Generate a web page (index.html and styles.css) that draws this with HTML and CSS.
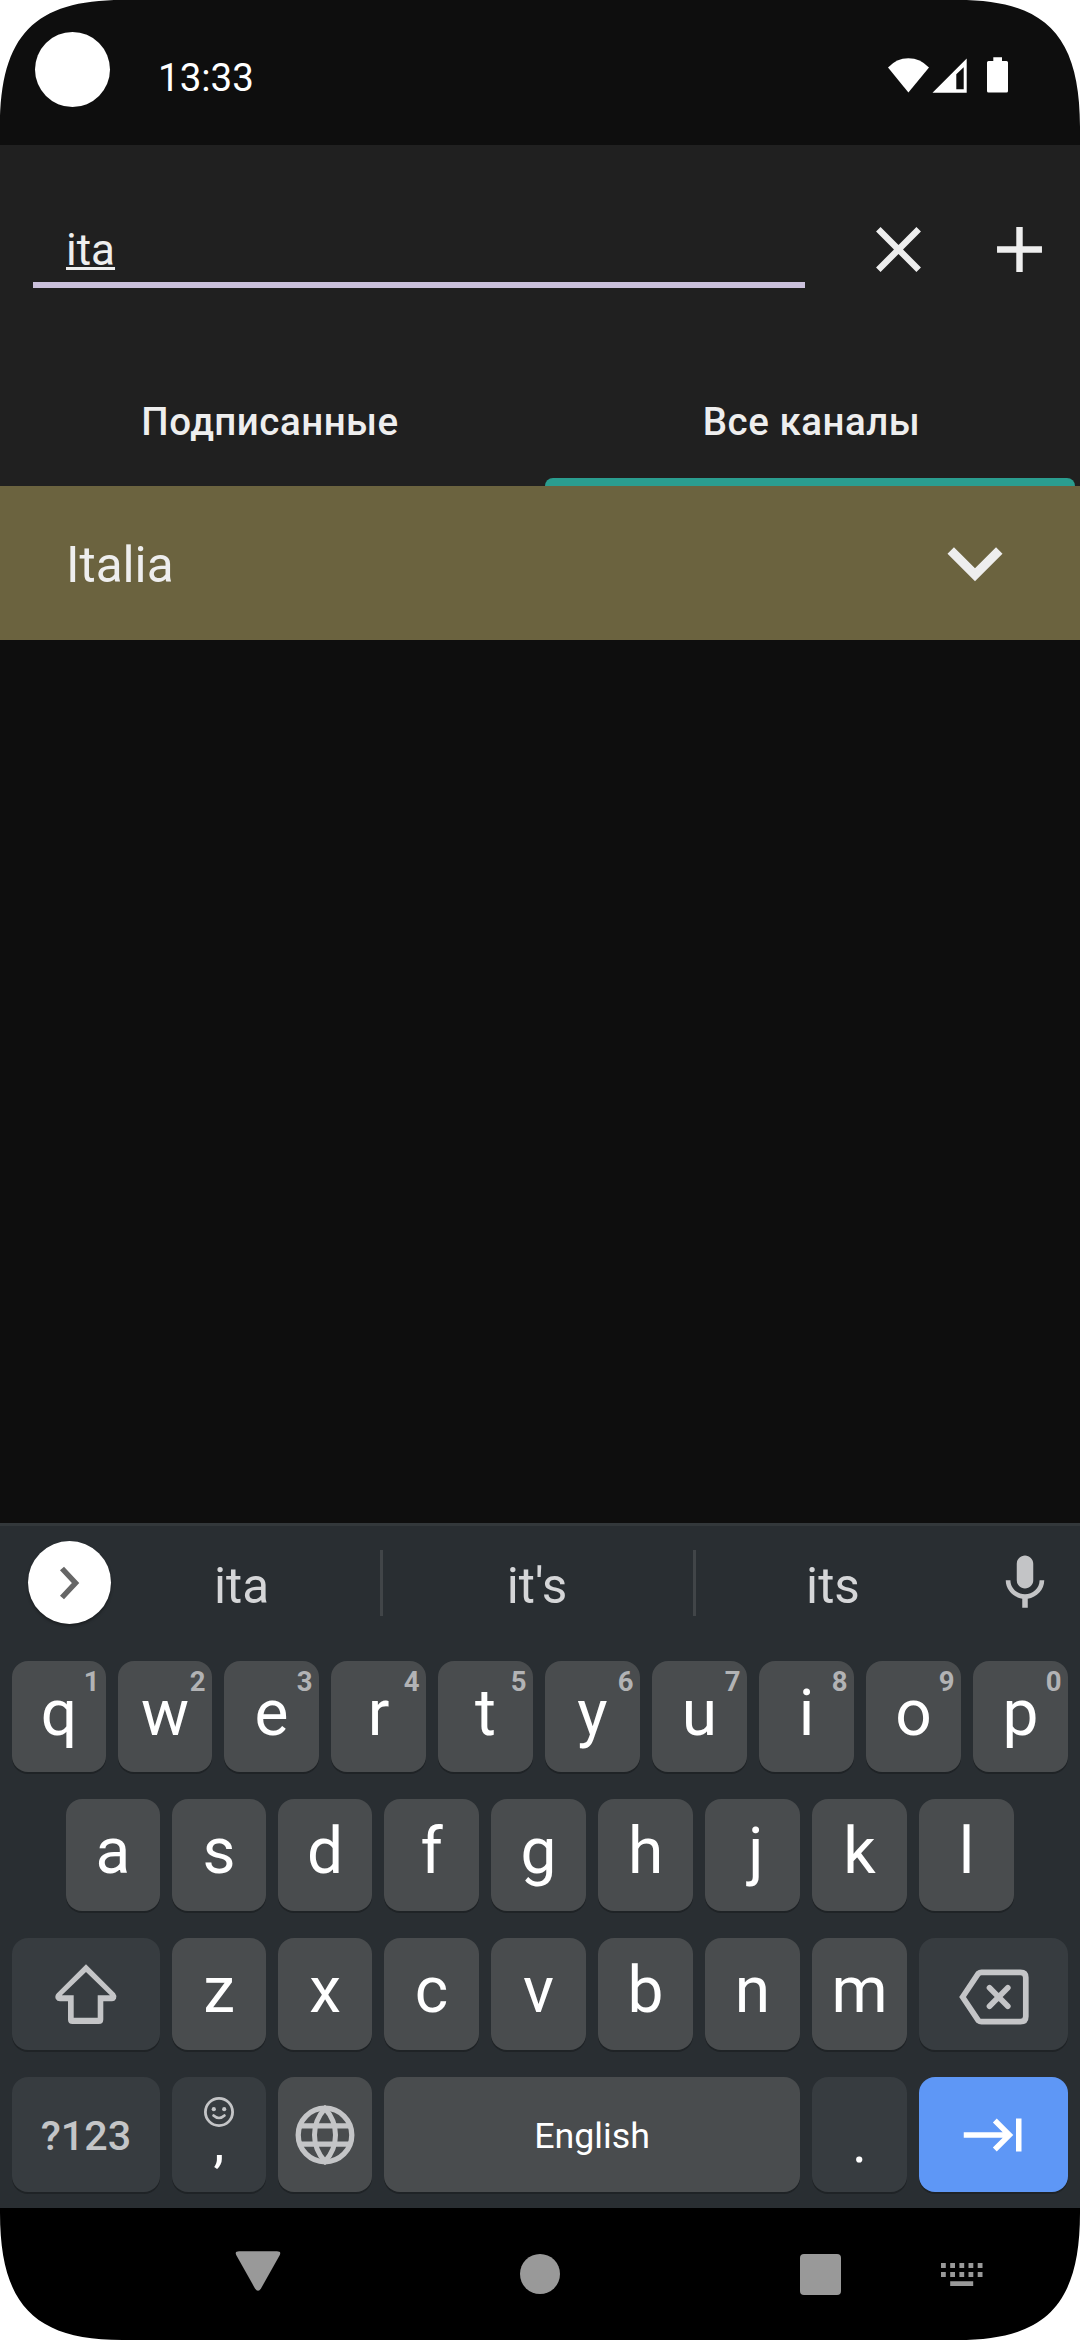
FILE: index.html
```html
<!DOCTYPE html>
<html lang="ru">
<head>
<meta charset="utf-8">
<title>Каналы</title>
<link rel="stylesheet" href="styles.css">
</head>
<body>
<div class="screen">
  <header class="status">
    <span class="camera"></span>
    <span class="clock">13:33</span>
    <svg class="status-icons" width="122" height="38" viewBox="887 56 122 38" fill="#fff">
      <path d="M908.4 92.4 888 67.6Q896.500 58.300 908.400 58.300T929 67.600Z"/>
      <path fill-rule="evenodd" d="M932.500 92.700 966.700 58.400V92.700ZM956.300 89.300H963.700V67.300L956.300 74.300Z"/>
      <path d="M993.300 57.200H1002V61H1006.500Q1008 61 1008 62.500V91Q1008 92.600 1006.500 92.600H988.500Q987 92.600 987 91V62.500Q987 61 988.500 61H993.300Z"/>
    </svg>
  </header>

  <section class="toolbar">
    <div class="search">
      <div class="field"><span class="query">ita</span></div>
      <svg class="action" viewBox="0 0 24 24"><path d="M19 6.410 17.590 5 12 10.590 6.410 5 5 6.410 10.590 12 5 17.590 6.410 19 12 13.410 17.590 19 19 17.590 13.410 12z"/></svg>
      <svg class="action" viewBox="0 0 24 24"><path d="M19 13h-6v6h-2v-6H5v-2h6V5h2v6h6v2z"/></svg>
    </div>
    <nav class="tabs">
      <div class="tab">Подписанные</div>
      <div class="tab active">Все каналы</div>
    </nav>
  </section>

  <main class="list">
    <div class="row">
      <span class="name">Italia</span>
      <svg class="expand" viewBox="0 0 24 24"><path d="M7.410 8.590 12 13.170l4.590-4.580L18 10l-6 6-6-6z"/></svg>
    </div>
  </main>

  <section class="keyboard">
    <div class="strip">
      <span class="more"><svg width="22" height="36" viewBox="0 0 22 36"><path d="M3 3.500 16.500 18 3 32.500" fill="none" stroke="#666" stroke-width="5.500"/></svg></span>
      <span class="word first">ita</span>
      <span class="word mid">it's</span>
      <span class="word last">its</span>
      <svg class="mic" viewBox="0 0 24 24"><path d="M12 14c1.660 0 3-1.340 3-3V5c0-1.660-1.340-3-3-3S9 3.340 9 5v6c0 1.660 1.340 3 3 3zM17.300 11c0 3-2.540 5.100-5.300 5.100S6.700 14 6.700 11H5c0 3.410 2.720 6.230 6 6.720V21h2v-3.280c3.280-.480 6-3.300 6-6.720z"/></svg>
    </div>
    <div class="keys">
      <div class="keyrow top">
        <div class="key">q<sup class="alt">1</sup></div><div class="key">w<sup class="alt">2</sup></div><div class="key">e<sup class="alt">3</sup></div><div class="key">r<sup class="alt">4</sup></div><div class="key">t<sup class="alt">5</sup></div><div class="key">y<sup class="alt">6</sup></div><div class="key">u<sup class="alt">7</sup></div><div class="key">i<sup class="alt">8</sup></div><div class="key">o<sup class="alt">9</sup></div><div class="key">p<sup class="alt">0</sup></div>
      </div>
      <div class="keyrow home">
        <div class="key">a</div><div class="key">s</div><div class="key">d</div><div class="key">f</div><div class="key">g</div><div class="key">h</div><div class="key hook">j</div><div class="key">k</div><div class="key">l</div>
      </div>
      <div class="keyrow lower">
        <div class="key fn wide">
          <svg width="68" height="66" viewBox="0 0 68 66"><path fill-rule="evenodd" d="M34 3.200 63 32.300Q65.200 34.800 64 37.800 62.800 40.300 60 40.300H51.300V58.500Q51.300 63 46.800 63H20.500Q16 63 16 58.500V40.300H8Q5 40.300 3.700 37.800 2.500 34.800 5 32.300ZM34 11 9.800 34.300H21.700V56.800H45.700V34.300H58Z"/></svg>
        </div>
        <div class="key">z</div><div class="key">x</div><div class="key">c</div><div class="key">v</div><div class="key">b</div><div class="key">n</div><div class="key">m</div>
        <div class="key fn wide">
          <svg class="erase" width="72" height="58" viewBox="0 0 72 58"><path d="M4.600 29 20 5.800Q21.800 4.300 23.500 4.300H62.500Q67.800 4.300 67.800 9.500V48.500Q67.800 53.700 62.500 53.700H23.500Q21.800 53.700 20 52.200ZM31.500 19.800 49.800 38.200M49.800 19.800 31.500 38.200" fill="none" stroke="#c4c5c7" stroke-width="5.700" stroke-linecap="round"/></svg>
        </div>
      </div>
      <div class="keyrow bottom">
        <div class="key fn wide symbols">?123</div>
        <div class="key fn comma">
          <svg width="32" height="32" viewBox="0 0 32 32"><circle cx="16" cy="16" r="13.600" fill="none" stroke="#c4c5c7" stroke-width="2.800"/><circle cx="10.800" cy="13.200" r="2.100"/><circle cx="21.200" cy="13.200" r="2.100"/><path d="M10.500 19.500Q16 24.500 21.500 19.500" fill="none" stroke="#c4c5c7" stroke-width="2.600" stroke-linecap="round"/></svg>
          <span>,</span>
        </div>
        <div class="key globe">
          <svg width="60" height="60" viewBox="0 0 60 60" fill="none" stroke="#c4c5c7" stroke-width="5.300"><circle cx="30" cy="30" r="26.800"/><path d="M5.500 20.900H54.500M5.500 39.200H54.500"/><path d="M30 3.500Q19.500 15 19.500 30T30 56.500Q40.500 45 40.500 30T30 3.500Z" stroke-width="5"/></svg>
        </div>
        <div class="key space">English</div>
        <div class="key fn period">.</div>
        <div class="key wide enter">
          <svg width="66" height="66" viewBox="0 0 24 24"><path d="M11.590 7.410 15.170 11H1v2h14.170l-3.590 3.590L13 18l6-6-6-6zM20 6v12h2V6z"/></svg>
        </div>
      </div>
    </div>
  </section>

  <footer class="navbar">
    <svg class="nav-back" width="46" height="40" viewBox="0 0 46 40"><path d="M4 .300H42Q46.500 .300 44.800 4L26 37.500Q23 42 20 37.500L1.200 4Q-.500 .300 4 .300Z"/></svg>
    <span class="nav-home"></span>
    <span class="nav-recent"></span>
    <svg class="nav-ime" width="42" height="23" viewBox="0 0 42 23"><path d="M0 0h4.800v5H0zM9.200 0H14v5H9.200zM18.400 0h4.800v5h-4.800zM27.500 0h4.800v5h-4.800zM36.700 0h4.800v5h-4.800zM0 9h4.800v5H0zM9.200 9H14v5H9.200zM18.400 9h4.800v5h-4.800zM27.500 9h4.800v5h-4.800zM36.700 9h4.800v5h-4.800zM9.200 18.200h23v4.800h-23z"/></svg>
  </footer>

  <svg class="corner tl" viewBox="0 0 128 128"><path d="M0 127C0 35 35 0 122 0H0Z"/></svg>
  <svg class="corner tr" viewBox="0 0 128 128"><path d="M0 127C0 35 35 0 122 0H0Z"/></svg>
  <svg class="corner bl" viewBox="0 0 128 128"><path d="M0 127C0 35 35 0 122 0H0Z"/></svg>
  <svg class="corner br" viewBox="0 0 128 128"><path d="M0 127C0 35 35 0 122 0H0Z"/></svg>
</div>
</body>
</html>
```
FILE: styles.css
```css
* { box-sizing: border-box; }
body { margin: 0; background: #fff; font-family: Roboto, "Liberation Sans", sans-serif; }
svg { display: block; flex: none; }

.screen {
  position: relative;
  width: 1080px;
  height: 2340px;
  overflow: hidden;
  display: flex;
  flex-direction: column;
  background: #0e0e0e;
  color: #eee;
}

/* Status bar */
.status { height: 145px; display: flex; align-items: flex-start; padding: 32px 71px 0 35px; }
.camera { width: 75px; height: 75px; border-radius: 50%; background: #fff; }
.clock { margin: 23px 0 0 48px; font-size: 38.5px; line-height: 46px; color: #fff; }
.status-icons { margin: 24px 0 0 auto; }

/* Search and tabs */
.toolbar { height: 341px; background: #202020; display: flex; flex-direction: column; justify-content: space-between; }
.search { display: flex; padding: 66px 22px 0 33px; }
.field { width: 772px; height: 77px; padding-left: 33px; border-bottom: 6px solid #cbc1dc; }
.query {
  font-size: 44px;
  line-height: 78px;
  text-decoration: underline;
  text-decoration-thickness: 3px;
  text-underline-offset: 2px;
}
.action { width: 77px; height: 77px; fill: #eee; margin-left: 55px; }
.action + .action { margin-left: 44px; }
.tabs { display: grid; grid-template-columns: 1fr 1fr; height: 129px; }
.tab {
  position: relative;
  text-align: center;
  font-size: 38.5px;
  font-weight: 500;
  line-height: 129px;
  letter-spacing: 0.5px;
}
.tab.active { padding-left: 3px; }
.tab.active::after {
  content: "";
  position: absolute;
  left: 5px;
  right: 5px;
  bottom: 0;
  height: 8px;
  border-radius: 8px 8px 0 0;
  background: #2a9d8f;
}

/* Results */
.list { flex: 1; }
.row {
  height: 154px;
  padding: 0 50px 0 66px;
  display: flex;
  align-items: center;
  justify-content: space-between;
  background: #6b633f;
  font-size: 49.5px;
}
.name { padding-top: 4px; }
.expand { width: 110px; height: 110px; fill: #eee; }

/* Keyboard */
.keyboard { height: 685px; border-top: 3px solid #33383b; background: #292e32; }
.strip { height: 135px; display: flex; padding: 15px 22px 0 28px; }
.more {
  width: 83px;
  height: 83px;
  border-radius: 50%;
  background: #fff;
  box-shadow: 0 2px 3px rgba(0, 0, 0, .35);
  display: flex;
  align-items: center;
  justify-content: center;
}
.word { height: 66px; margin-top: 9px; line-height: 72px; text-align: center; font-size: 49.5px; color: #d5d6d8; }
.word.first { width: 277px; margin-left: -8px; }
.word.mid { width: 316px; padding-right: 2px; border: solid #414548; border-width: 0 3px; }
.word.last { width: 274px; }
.mic { width: 66px; height: 66px; margin: 9px 0 0 auto; fill: #c3c4c6; }

.keys { display: grid; grid-template-rows: 111px 112px 112px 115px; row-gap: 27px; padding: 0 12px; }
.keyrow { display: grid; grid-template-rows: 100%; column-gap: 12px; min-height: 0; }
.keyrow.top { grid-template-columns: repeat(2, 94px) repeat(8, 95px); }
.keyrow.home { grid-template-columns: repeat(3, 94px) repeat(6, 95px); padding: 0 54px; }
.keyrow.lower { grid-template-columns: 148px repeat(2, 94px) repeat(5, 95px) 149px; }
.keyrow.bottom { grid-template-columns: 148px repeat(2, 94px) 416px 95px 149px; }
.key {
  position: relative;
  min-height: 0;
  border-radius: 16px;
  background: #494c4e;
  box-shadow: 0 2px 0 #1f2326;
  color: #fff;
  text-align: center;
  font-size: 64px;
  line-height: 106px;
}
.hook { padding-left: 7px; }
.fn { background: #373c40; fill: #c4c5c7; }
.wide { display: flex; align-items: center; justify-content: center; }
.alt {
  position: absolute;
  top: 4px;
  right: 6.5px;
  font-size: 27.5px;
  font-weight: 700;
  line-height: 34px;
  color: #b2b3b5;
}
.erase { margin-top: 5px; }
.symbols { padding-top: 3px; font-size: 41.25px; font-weight: 500; line-height: 112px; color: #c4c5c7; }
.key.comma { display: flex; flex-direction: column; align-items: center; padding-top: 19px; font-size: 55px; line-height: 26px; }
.comma span { margin-top: 1px; }
.globe { display: flex; align-items: center; justify-content: center; }
.key.space { font-size: 35.75px; line-height: 118px; }
.key.period { padding-top: 20px; font-size: 55px; line-height: 92px; }
.enter { background: #5e97f6; fill: #fff; }

/* Navigation bar */
.navbar { height: 132px; display: flex; align-items: flex-start; background: #000; fill: #999; padding: 43px 0 0 235px; }
.nav-home { width: 40px; height: 40px; margin: 3px 0 0 239px; border-radius: 50%; background: #999; }
.nav-recent { width: 41px; height: 41px; margin: 3px 0 0 240px; border-radius: 4px; background: #999; }
.nav-ime { margin: 12px 0 0 100px; }

/* Rounded display corners */
.corner { position: absolute; width: 128px; height: 128px; fill: #fff; }
.tl { top: 0; left: 0; }
.tr { top: 0; right: 0; transform: scaleX(-1); }
.bl { bottom: 0; left: 0; transform: scaleY(-1); }
.br { bottom: 0; right: 0; transform: scale(-1); }
```
